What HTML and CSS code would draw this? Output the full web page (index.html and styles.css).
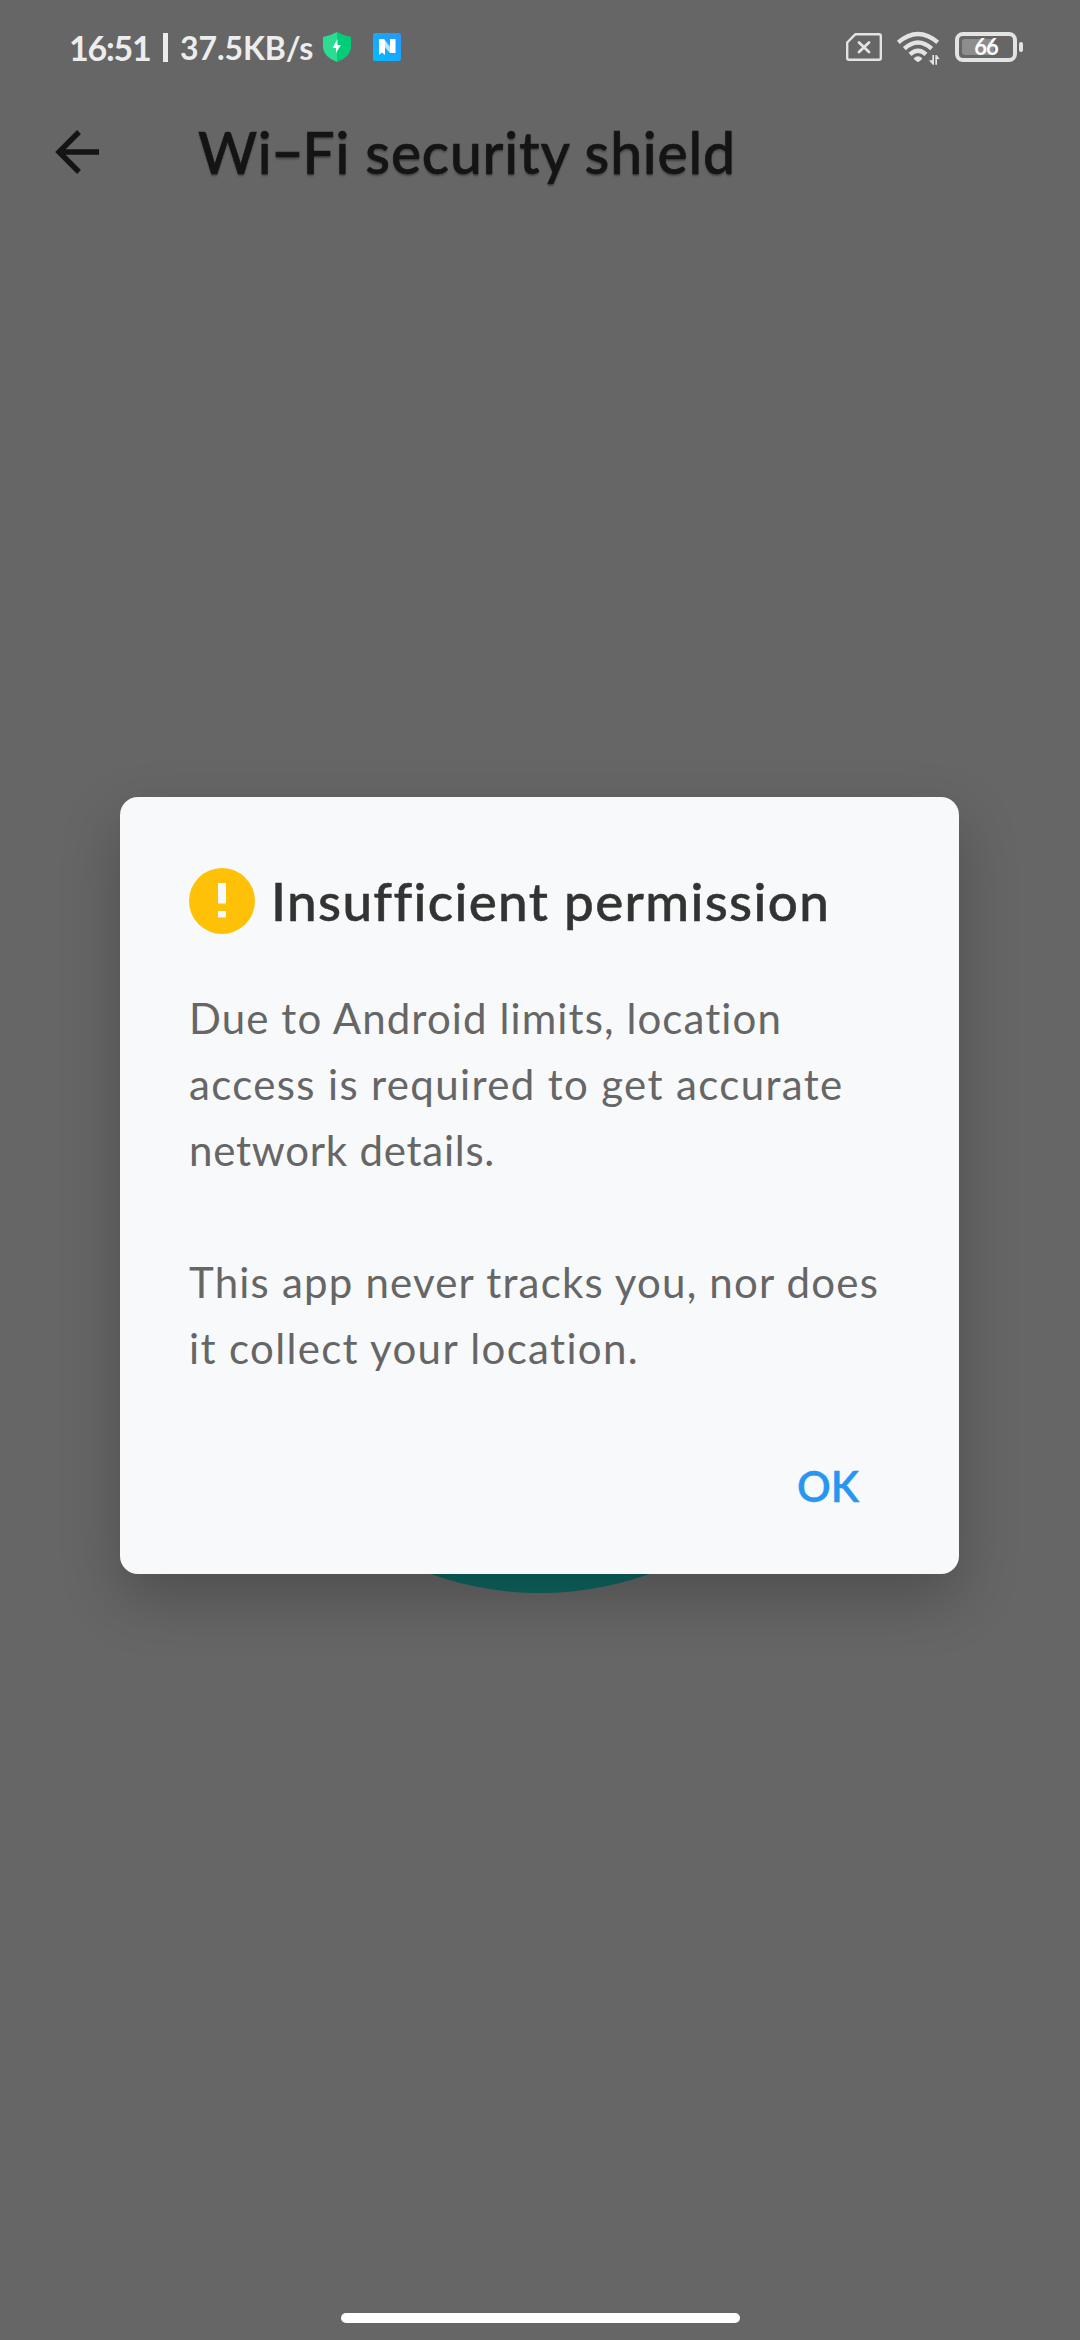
FILE: index.html
```html
<!DOCTYPE html>
<html lang="en">
<head>
<meta charset="utf-8">
<title>Wi-Fi security shield</title>
<link rel="stylesheet" href="styles.css">
</head>
<body>
<header class="status-bar">
  <span class="clock">16:51</span>
  <span class="divider"></span>
  <span class="speed">37.5KB/s</span>
  <svg class="shield" viewBox="0 0 28 30">
    <path fill="#2bdc93" d="M14 0 Q7 4 0 5 V16 Q1 25 14 30Z"/>
    <path fill="#00cd79" d="M14 0 Q21 4 28 5 V16 Q27 25 14 30Z"/>
    <path fill="#fff" d="M14.5 7 L9.500 16 H13 V21 L18 13 H14.500Z"/>
  </svg>
  <svg class="app-n" viewBox="0 0 28 28">
    <defs>
      <linearGradient id="n-bg" x1="0" y1="1" x2="1" y2="0"><stop offset="0" stop-color="#07baff"/><stop offset="1" stop-color="#2896fb"/></linearGradient>
    </defs>
    <rect width="28" height="28" rx="2" fill="url(#n-bg)"/>
    <path fill="#b9e3ff" d="M6 6 H11 L22 20 H17 L6 8Z"/>
    <path fill="#fff" d="M6 6 H11 L12 8 V22 L9 19.500 L6 22Z M17 6 H22.500 V20 H17Z"/>
  </svg>
  <span class="spacer"></span>
  <svg class="sim" viewBox="0 0 36 28">
    <path fill="none" stroke="#e3e3e3" stroke-width="2.400" stroke-linejoin="round" d="M9.500 1.200 H33 Q34.800 1.200 34.800 3 V25 Q34.800 26.800 33 26.800 H3 Q1.200 26.800 1.200 25 V9.500Z"/>
    <path stroke="#e3e3e3" stroke-width="2.800" stroke-linecap="round" d="M13 9.500 L23 19 M23 9.500 L13 19"/>
  </svg>
  <svg class="wifi" viewBox="0 0 126 99">
    <g fill="none" stroke="#e3e3e3" stroke-width="13">
      <path d="M4 31 Q63 -19 122 31"/>
      <path d="M22 50 Q63 13 104 50"/>
      <path d="M39 67 Q63 45 87 67"/>
    </g>
    <path fill="#e3e3e3" d="M50 79 Q63 66 76 79 Q74 86 63 91 Q52 86 50 79Z"/>
    <path fill="#e3e3e3" d="M106 69 H111 V98 H107 L96 85 H106Z M115 98 V69 H119 L128 81 H120 V98Z"/>
  </svg>
  <div class="battery"><span class="charge"></span><span class="level">66</span></div>
  <span class="nub"></span>
</header>

<nav class="app-bar">
  <svg class="back" viewBox="0 0 44 44"><path fill="none" stroke="#141414" stroke-width="5.400" d="M44 22 H5 M24 2 L4 22 L24 42"/></svg>
  <h1 class="title">Wi<span class="dash">-</span>Fi security shield</h1>
</nav>

<main class="content"><div class="scan-circle"></div></main>
<footer class="gesture"><span class="handle"></span></footer>

<div class="overlay">
  <section class="dialog" role="dialog">
    <div class="heading">
      <svg class="alert" viewBox="0 0 66 66"><circle cx="33" cy="33" r="33" fill="#ffc107"/><path fill="#f8f9fb" d="M29 15 H37 V35.500 H29Z M29 43 H37 V49.500 H29Z"/></svg>
      <h2 class="heading-text">Insufficient permission</h2>
    </div>
    <p class="message">
      <span class="line l1">Due to Android limits, location</span>
      <span class="line l2">access is required to get accurate</span>
      <span class="line l3">network details.</span>
    </p>
    <p class="message">
      <span class="line l4">This app never tracks you, nor does</span>
      <span class="line l5">it collect your location.</span>
    </p>
    <div class="actions"><button class="ok">OK</button></div>
  </section>
</div>
</body>
</html>
```
FILE: styles.css
```css
* { box-sizing: border-box; margin: 0; padding: 0; }
body {
  width: 1080px; height: 2340px; overflow: hidden; position: relative;
  display: flex; flex-direction: column;
  background: #666; font-family: Lato, sans-serif;
  font-variant-ligatures: none;
}
svg { display: block; flex: none; overflow: visible; }

.status-bar { height: 94px; padding: 0 57px 0 69px; display: flex; align-items: center; color: #ededed; white-space: nowrap; }
.clock { width: 94px; font-size: 34px; font-weight: 700; letter-spacing: -1.2px; }
.divider { width: 5px; height: 29px; background: #ededed; }
.speed { width: 143px; margin-left: 12px; font-size: 32px; font-weight: 700; letter-spacing: -.1px; }
.shield { width: 28px; height: 30px; }
.app-n { width: 28px; height: 28px; margin-left: 22px; }
.spacer { flex: 1; }
.sim { width: 36px; height: 28px; }
.wifi { width: 42px; height: 33px; margin: 3px 0 0 15px; }
.battery {
  width: 62px; height: 30px; margin-left: 16px; padding: 0 3px;
  display: flex; align-items: center; position: relative;
  border: 4px solid #e3e3e3; border-radius: 8px;
}
.charge { width: 32px; height: 16px; border-radius: 3px; background: #8d8d8d; }
.level { position: absolute; inset: 0; line-height: 22px; text-align: center; font-size: 22px; font-weight: 700; letter-spacing: -1px; color: #fff; }
.nub { width: 4px; height: 10px; margin-left: 2px; border-radius: 2px; background: #e3e3e3; }

.app-bar { height: 116px; padding-left: 55px; display: flex; align-items: center; color: #141414; }
.back { width: 44px; height: 44px; }
.title { margin-left: 99px; font-size: 57px; font-weight: 500; line-height: 116px; letter-spacing: .8px; white-space: nowrap; text-shadow: 0 2px 2px rgba(0, 0, 0, .35); -webkit-text-stroke: .6px #141414; }
.dash { display: inline-block; margin: 0 4px; transform: translateY(-2px) scaleX(1.6); }

.content { flex: 1; padding-top: 733px; display: flex; justify-content: center; align-items: flex-start; }
.scan-circle { width: 650px; height: 650px; border-radius: 50%; background: #0e655f; }
.gesture { height: 27px; display: flex; justify-content: center; }
.handle { width: 399px; height: 10px; border-radius: 5px; background: #fff; }

.overlay { position: absolute; inset: 0; padding: 797px 121px 0 120px; }
.dialog {
  height: 777px; padding: 71px 69px 55px; border-radius: 18px;
  display: flex; flex-direction: column;
  background: #f7f9fb; box-shadow: 0 24px 60px rgba(0, 0, 0, .235);
}
.heading { display: flex; align-items: center; gap: 16px; margin-bottom: 51px; }
.alert { width: 66px; height: 66px; }
.heading-text { font-size: 53px; font-weight: 500; line-height: 66px; letter-spacing: 1.35px; color: #333; white-space: nowrap; -webkit-text-stroke: .5px #333; }
.message { font-size: 42px; line-height: 66px; color: #666; white-space: nowrap; }
.message + .message { margin-top: 66px; }
.line { display: block; }
.l1 { letter-spacing: 1.1px; }
.l2 { letter-spacing: 1.35px; }
.l3 { letter-spacing: .75px; }
.l4 { letter-spacing: 1.2px; }
.l5 { letter-spacing: 1.35px; }
.actions { margin-top: auto; display: flex; justify-content: flex-end; padding-right: 31px; }
.ok { border: 0; background: none; font: 600 42px/66px Lato, sans-serif; color: #2896f0; -webkit-text-stroke: .4px #2896f0; }
```
